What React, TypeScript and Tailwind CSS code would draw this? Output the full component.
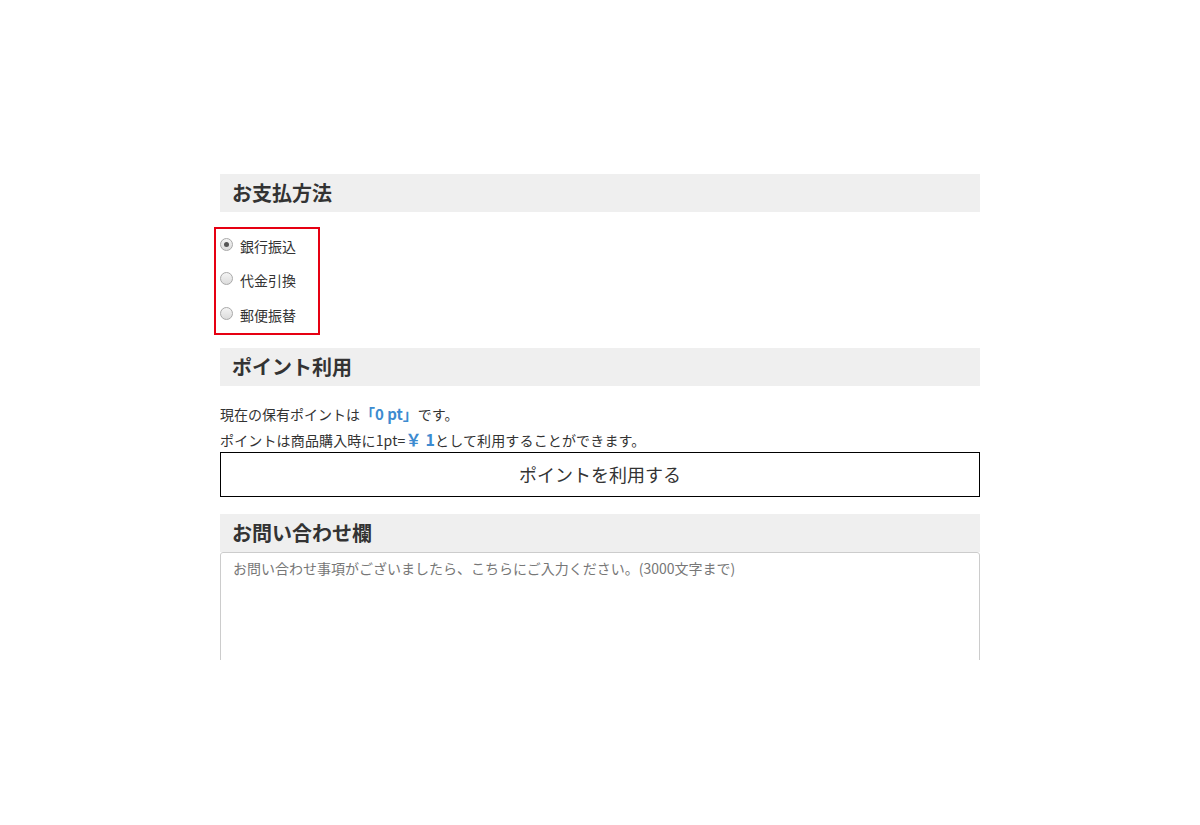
import React from "react";

const font = { fontFamily: '"Noto Sans CJK JP", "Noto Sans", sans-serif' };

function Radio({ checked }: { checked?: boolean }) {
  return (
    <span className="relative -top-[2px] inline-flex h-[13px] w-[13px] shrink-0 items-center justify-center rounded-full border border-[#a9a9a9] bg-gradient-to-b from-[#f4f4f4] to-[#dcdcdc]">
      {checked && <span className="h-[5px] w-[5px] rounded-full bg-[#555]" />}
    </span>
  );
}

function Heading({ children }: { children: React.ReactNode }) {
  return (
    <div className="flex h-[38px] items-center bg-[#efefef] pl-[12px] text-[20px] font-bold text-[#333]">
      {children}
    </div>
  );
}

export default function App() {
  const options = [
    { label: "銀行振込", checked: true },
    { label: "代金引換" },
    { label: "郵便振替" },
  ];
  return (
    <div className="min-h-[825px] w-full bg-white" style={font}>
      <div className="mx-auto w-[760px] pt-[174px] text-[#333]">
        <Heading>お支払方法</Heading>
        <div className="-ml-[6px] mt-[15px] w-[106px] border-2 border-[#e60012] pl-[4px]">
          {options.map((o) => (
            <div key={o.label} className="flex h-[34.6px] items-center gap-[7px] text-[14px]">
              <Radio checked={o.checked} />
              <span>{o.label}</span>
            </div>
          ))}
        </div>
        <div className="mt-[13px]">
          <Heading>ポイント利用</Heading>
        </div>
        <div className="mt-[15px] text-[14px] leading-[25px]">
          <p>
            現在の保有ポイントは
            <span className="text-[15px] font-bold text-[#3d8bd0]">「0 pt」</span>
            です。
          </p>
          <p className="tracking-[0.15px]">
            ポイントは商品購入時に1pt=
            <span className="text-[16px] font-bold text-[#3d8bd0]">￥ 1</span>
            として利用することができます。
          </p>
        </div>
        <button className="-mt-[1px] flex h-[45px] w-full items-center justify-center border border-black bg-white text-[18px] text-[#333]">
          ポイントを利用する
        </button>
        <div className="mt-[17px]">
          <Heading>お問い合わせ欄</Heading>
        </div>
        <div className="h-[108px] overflow-hidden">
          <textarea
            className="block h-[200px] w-full resize-none rounded-[3px] border border-[#cccccc] px-[12px] pb-[7px] pt-[5px] text-[14px] text-[#333] placeholder:text-[#777] outline-none"
            style={font}
            placeholder="お問い合わせ事項がございましたら、こちらにご入力ください。(3000文字まで)"
          />
        </div>
      </div>
    </div>
  );
}
